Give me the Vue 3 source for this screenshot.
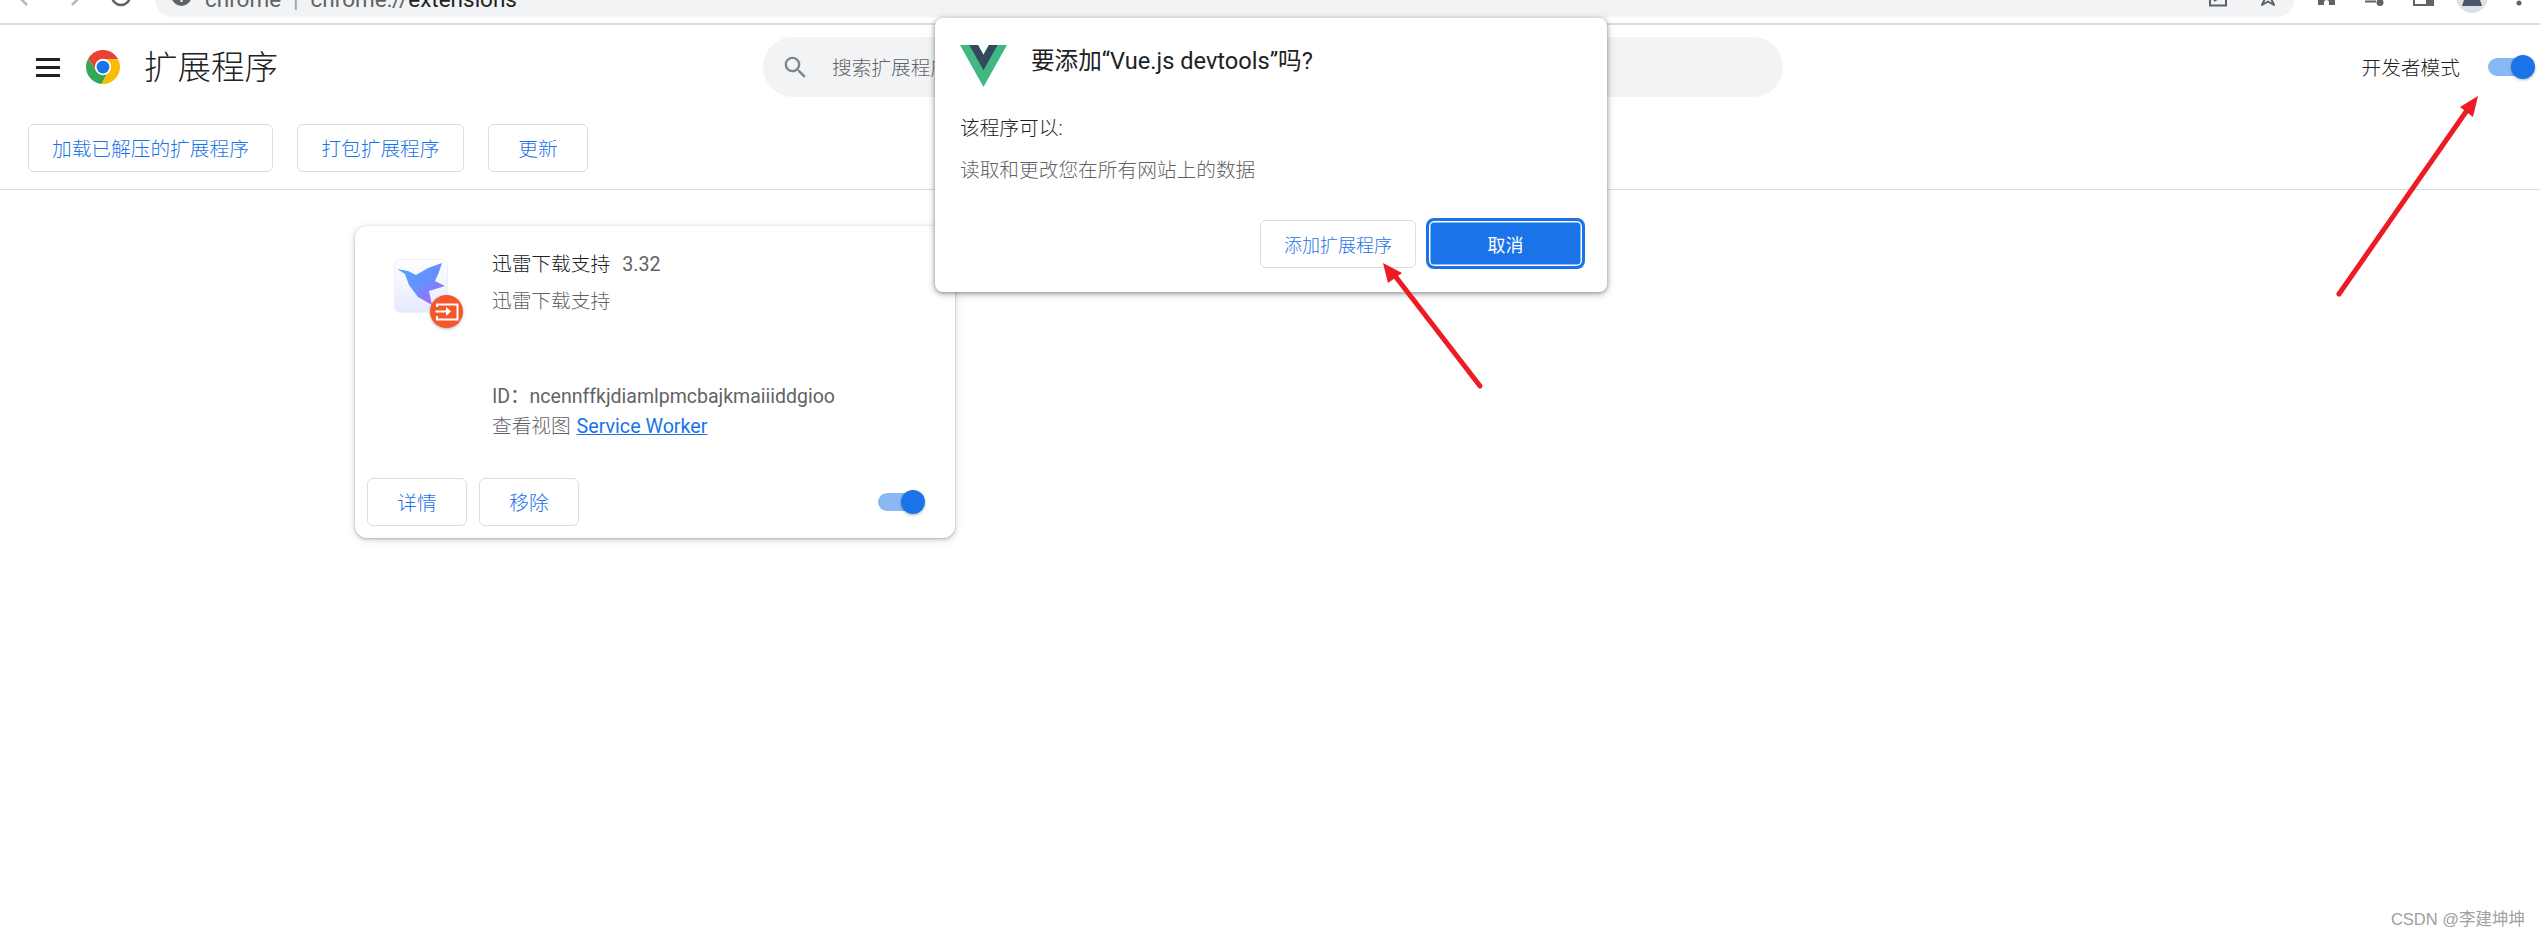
<script setup>
const actions = ['加载已解压的扩展程序', '打包扩展程序', '更新']
</script>

<template>
  <div class="page">
    <div class="toolbar">
      <svg class="nav" viewBox="0 0 155 17" width="155" height="17">
        <path d="M19 -3l8 8" class="faint" />
        <path d="M80 -3l-8 8" class="faint" />
        <circle cx="121" cy="-4" r="9" class="ring" />
      </svg>
      <div class="omnibox">
        <svg class="info" viewBox="172 0 20 17" width="20" height="17">
          <circle cx="181.5" cy="-4" r="10" fill="#5f6368" />
          <rect x="180.5" y="-3" width="2" height="5" fill="#f1f3f4" />
        </svg>
        <span class="url"><span class="url-dim">chrome<span class="url-sep">|</span>chrome://</span>extensions</span>
        <svg class="omni-end" viewBox="2200 0 94 17" width="94" height="17">
          <path d="M2210 -4V5.500H2226V-4" fill="none" stroke="#5f6368" stroke-width="2" />
          <path d="M2214 1L2222 -4" fill="none" stroke="#5f6368" stroke-width="2" />
          <path d="M2268 -8l-6 13 6-3.500 6 3.500z" fill="none" stroke="#5f6368" stroke-width="2" stroke-linejoin="round" />
        </svg>
      </div>
      <svg class="tools" viewBox="2294 0 246 23" width="246" height="23">
        <path d="M2318 -6h17V5h-6V2.500a2.500 2.500 0 0 0-5 0V5h-6z" fill="#5f6368" />
        <rect x="2365" y="0.500" width="11" height="2" fill="#5f6368" />
        <circle cx="2380" cy="2.500" r="3.500" fill="#5f6368" />
        <path d="M2413 -4h21V6h-21zM2415 -4V4H2426V-4z" fill="#5f6368" fill-rule="evenodd" />
        <circle cx="2472" cy="-3" r="16" fill="#dee1e6" />
        <path d="M2466 -6h12l4 12h-20z" fill="#4a5570" />
        <circle cx="2519" cy="3" r="2.500" fill="#5f6368" />
      </svg>
    </div>

    <header class="header">
      <div class="brand">
        <div class="menu"><i></i><i></i><i></i></div>
        <svg class="logo" viewBox="0 0 48 48" width="34" height="34">
          <defs>
            <clipPath id="chrome-disc"><circle cx="24" cy="24" r="24" /></clipPath>
          </defs>
          <g clip-path="url(#chrome-disc)">
            <path d="M24 24L14.500 29.500 3.200 12 0 12 0 0 48 0 48 13 24 13z" fill="#ea4335" />
            <path d="M24 24L14.500 29.500 3.200 12 0 12 0 48 22 48 29.500 33.500z" fill="#34a853" />
            <path d="M24 24L24 13 48 13 48 48 22 48 29.500 33.500z" fill="#fbbc04" />
          </g>
          <circle cx="24" cy="24" r="11.500" fill="#fff" />
          <circle cx="24" cy="24" r="9" fill="#1a73e8" />
        </svg>
        <h1 class="title">扩展程序</h1>
      </div>
      <div class="search">
        <svg viewBox="0 0 24 24" width="29" height="29">
          <path fill="#80868b" d="M15.500 14h-.79l-.28-.27A6.471 6.471 0 0 0 16 9.500 6.500 6.500 0 1 0 9.500 16c1.610 0 3.090-.59 4.230-1.570l.27.28v.79l5 4.990L20.490 19l-4.990-5zm-6 0C7.010 14 5 11.990 5 9.500S7.010 5 9.500 5 14 7.010 14 9.500 11.990 14 9.500 14z" />
        </svg>
        <span class="search-text">搜索扩展程序</span>
      </div>
      <div class="dev">
        <span class="dev-label">开发者模式</span>
        <div class="toggle"><span class="track"></span><span class="thumb"></span></div>
      </div>
    </header>

    <div class="actions">
      <button v-for="a in actions" :key="a" class="btn">{{ a }}</button>
    </div>

    <main class="main">
      <section class="card">
        <div class="card-body">
          <div class="ext-icon">
            <svg viewBox="0 0 54 54" width="54" height="54">
              <defs>
                <linearGradient id="bird" x1="0.1" y1="0.1" x2="0.8" y2="0.9">
                  <stop offset="0" stop-color="#4aa8ff" />
                  <stop offset="0.6" stop-color="#6a8cff" />
                  <stop offset="1" stop-color="#a56cf5" />
                </linearGradient>
              </defs>
              <path d="M3 10L14 12 22 16 34 9 48 4 45 13 41 22 51 27 35 32 38 46 24 38 15 26 11 15z" fill="url(#bird)" />
            </svg>
            <span class="badge">
              <svg viewBox="0 0 33 33" width="33" height="33">
                <path d="M7 12V9.500h20.500v15H7V21" fill="none" stroke="#fff" stroke-width="2" />
                <path d="M5.500 15.500H16V12l5 4.500-5 4.500v-3.500H5.500z" fill="#fff" />
              </svg>
            </span>
          </div>
          <div class="ext-text">
            <div class="ext-name">迅雷下载支持<span class="ext-ver">3.32</span></div>
            <div class="ext-desc">迅雷下载支持</div>
            <div class="ext-id">ID&#xFF1A;ncennffkjdiamlpmcbajkmaiiiddgioo</div>
            <div class="ext-view">查看视图 <a class="link">Service Worker</a></div>
          </div>
        </div>
        <div class="card-foot">
          <button class="btn">详情</button>
          <button class="btn">移除</button>
          <div class="toggle foot-toggle"><span class="track"></span><span class="thumb"></span></div>
        </div>
      </section>
    </main>

    <div class="dialog">
      <div class="dlg-head">
        <svg viewBox="0 0 256 221" width="47" height="42" preserveAspectRatio="none">
          <path d="M204.800 0H256L128 220.800 0 0h97.920L128 51.200 157.440 0h47.360z" fill="#41b883" />
          <path d="M50.560 0L128 133.120 204.800 0h-47.360L128 51.200 97.920 0H50.560z" fill="#35495e" />
        </svg>
        <div class="dlg-title">要添加&#x201C;Vue.js devtools&#x201D;吗?</div>
      </div>
      <div class="dlg-can">该程序可以:</div>
      <div class="dlg-perm">读取和更改您在所有网站上的数据</div>
      <div class="dlg-foot">
        <button class="btn btn-add">添加扩展程序</button>
        <button class="btn-cancel">取消</button>
      </div>
    </div>

    <svg class="arrows" viewBox="0 0 2540 937" width="2540" height="937">
      <line x1="2339" y1="294" x2="2470" y2="106" />
      <polygon points="2478,96 2460,107 2473,117" />
      <line x1="1480" y1="386" x2="1392" y2="272" />
      <polygon points="1383,263 1402,273 1388,283" />
    </svg>

    <div class="mark">CSDN @李建坤坤</div>
  </div>
</template>

<style>
html, body { margin: 0; background: #fff; }
</style>

<style scoped>
.page {
  position: relative;
  height: 937px;
  overflow: hidden;
  background: #fff;
  color: #202124;
  font-family: Roboto, "Noto Sans CJK SC", sans-serif;
  font-size: 19.700px;
  font-weight: 300;
}

/* clipped browser toolbar */
.toolbar {
  display: flex;
  align-items: flex-start;
  height: 23px;
  border-bottom: 2px solid #dcdcdc;
}
.nav, .tools, .info, .omni-end { flex: none; display: block; overflow: hidden; }
.faint { fill: none; stroke: #b4b7bb; stroke-width: 2.500; }
.ring { fill: none; stroke: #5f6368; stroke-width: 2.500; }
.omnibox {
  flex: 1;
  display: flex;
  align-items: flex-end;
  height: 17px;
  padding-left: 17px;
  background: #f1f3f4;
  border-radius: 0 0 24px 24px;
}
.url {
  margin-left: 13px;
  margin-bottom: 5px;
  line-height: 26px;
  font-size: 22.500px;
  font-weight: 400;
  white-space: pre;
  color: #202124;
}
.url-dim { color: #5f6368; }
.url-sep { margin: 0 12px; color: #9aa0a6; }
.omni-end { margin-left: auto; }

/* page header */
.header {
  display: flex;
  align-items: center;
  height: 84px;
}
.brand {
  display: flex;
  align-items: center;
  width: 763px;
  padding-left: 36px;
  box-sizing: border-box;
}
.menu {
  display: flex;
  flex-direction: column;
  gap: 5px;
  width: 24px;
}
.menu i { display: block; height: 3px; background: #202124; }
.logo { margin-left: 26px; }
.title {
  margin: 2px 0 0 24px;
  font-size: 33.500px;
  font-weight: 300;
  line-height: 40px;
}
.search {
  display: flex;
  align-items: center;
  gap: 22px;
  width: 1020px;
  height: 60px;
  padding-left: 18px;
  box-sizing: border-box;
  background: #f1f3f4;
  border-radius: 30px;
  color: #5f6368;
}
.search-text { margin-bottom: 2px; }
.dev {
  flex: 1;
  display: flex;
  align-items: center;
  justify-content: flex-end;
  padding-right: 5px;
}
.dev-label { margin-bottom: 2px; }
.toggle {
  position: relative;
  display: flex;
  align-items: center;
  flex: none;
  width: 47px;
  height: 24px;
}
.dev .toggle { margin-left: 28px; }
.track {
  width: 42px;
  height: 18px;
  border-radius: 9px;
  background: #8ab8f5;
}
.thumb {
  position: absolute;
  top: 0;
  right: 0;
  width: 24px;
  height: 24px;
  border-radius: 50%;
  background: #1a73e8;
  box-shadow: 0 1px 3px rgba(0, 0, 0, 0.3);
}

/* action row */
.actions {
  display: flex;
  gap: 24.500px;
  padding: 15px 0 17px 28px;
  border-bottom: 1px solid #dadce0;
}
.btn {
  min-width: 100px;
  height: 48px;
  padding: 0 23px 2px;
  box-sizing: border-box;
  background: #fff;
  border: 1px solid #dadce0;
  border-radius: 6px;
  color: #1a73e8;
  font: inherit;
}

/* extension card */
.main { padding: 36px 0 0 355px; }
.card {
  display: flex;
  flex-direction: column;
  width: 600px;
  height: 312px;
  box-sizing: border-box;
  background: #fff;
  border-radius: 12px;
  box-shadow: 0 1px 3px rgba(60, 64, 67, 0.35), 0 2px 8px rgba(60, 64, 67, 0.18);
}
.card-body {
  flex: 1;
  display: flex;
  gap: 44px;
  padding: 24px 0 0 39px;
}
.ext-icon {
  position: relative;
  flex: none;
  width: 54px;
  height: 54px;
  margin-top: 9px;
  box-sizing: border-box;
  border-radius: 7px;
  background: linear-gradient(#fff, #e6e9ff);
  box-shadow: inset 0 0 0 1px #eef0f6;
}
.ext-icon > svg { display: block; }
.badge {
  position: absolute;
  left: 35.500px;
  top: 35.500px;
  width: 33px;
  height: 33px;
  border-radius: 50%;
  background: #f4582a;
  box-shadow: 0 1px 3px rgba(0, 0, 0, 0.3);
}
.badge svg { display: block; }
.ext-text { line-height: 30px; color: #5f6368; }
.ext-name { color: #202124; }
.ext-ver { margin-left: 12px; color: #5f6368; font-weight: 400; }
.ext-desc { margin-top: 7px; }
.ext-id { margin-top: 65px; font-size: 19.500px; font-weight: 400; }
.ext-view { margin-top: 0; }
.link { margin-left: 1px; color: #1a73e8; font-weight: 400; text-decoration: underline; }
.card-foot {
  display: flex;
  align-items: center;
  gap: 12px;
  padding: 0 30px 12px 12px;
}
.foot-toggle { margin-left: auto; }

/* install dialog */
.dialog {
  position: absolute;
  top: 18px;
  left: 935px;
  display: flex;
  flex-direction: column;
  width: 672px;
  height: 274px;
  padding: 27px 22px 23px 25px;
  box-sizing: border-box;
  background: #fff;
  border-radius: 8px;
  box-shadow: 0 1px 4px rgba(60, 64, 67, 0.5), 0 2px 8px rgba(60, 64, 67, 0.25);
}
.dlg-head { display: flex; gap: 24px; height: 42px; }
.dlg-head svg { flex: none; }
.dlg-title { font-size: 23.600px; font-weight: 400; line-height: 30px; padding-top: 1px; }
.dlg-can { margin-top: 27px; line-height: 30px; }
.dlg-perm { margin-top: 12px; line-height: 30px; color: #5f6368; }
.dlg-foot {
  display: flex;
  align-items: center;
  justify-content: flex-end;
  gap: 10px;
  margin-top: auto;
}
.btn-add { width: 156px; padding: 0; font-size: 18px; }
.btn-cancel {
  width: 159px;
  height: 51px;
  box-sizing: border-box;
  background: #1a73e8;
  border: 3px solid #1a73e8;
  border-radius: 8px;
  box-shadow: inset 0 0 0 1.500px #fff;
  color: #fff;
  font: inherit;
  font-size: 18px;
  font-weight: 400;
}

/* annotation overlay */
.arrows { position: absolute; top: 0; left: 0; pointer-events: none; }
.arrows line { stroke: #ed1c24; stroke-width: 5; stroke-linecap: round; }
.arrows polygon { fill: #ed1c24; }

.mark {
  position: absolute;
  right: 15px;
  top: 907px;
  color: #a0a0a0;
  font-family: "Liberation Sans", "Noto Sans CJK SC", sans-serif;
  font-size: 16.500px;
  font-weight: 400;
  line-height: 24px;
}
</style>
